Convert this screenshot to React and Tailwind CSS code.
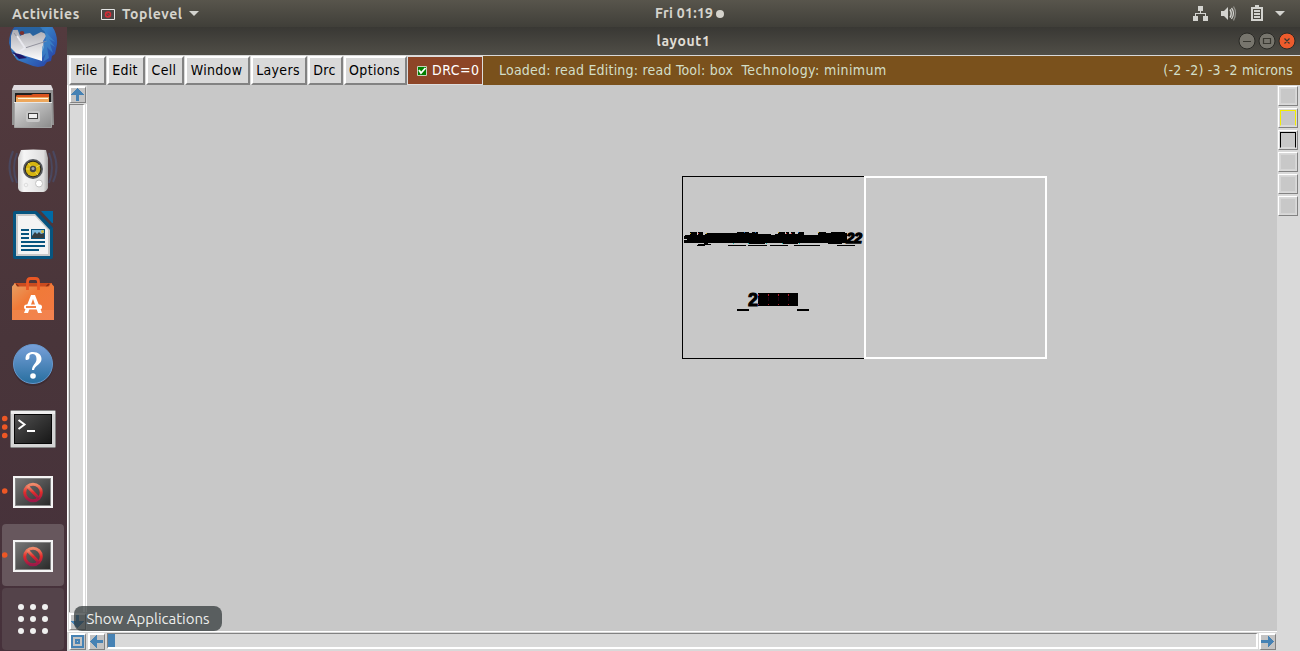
import React from 'react';

function Thunderbird() {
  return (
    <svg className="block" width="62" height="62" viewBox="2 12 62 62">
      <defs>
        <linearGradient id="tb" x1="0" y1="0" x2="1" y2="1"><stop offset="0" stopColor="#244c94" /><stop offset=".5" stopColor="#367fc6" /><stop offset="1" stopColor="#2537a0" /></linearGradient>
        <linearGradient id="mail" x1="0" y1="0" x2="0" y2="1"><stop offset="0" stopColor="#a9a9b0" /><stop offset="1" stopColor="#ffffff" /></linearGradient>
      </defs>
      <path d="M9 43C9 27 21 18 34 18c15 0 24 12 23 26l-2 10-3 2-1 5-4 1-3 4-6 1-5-1-8-3-8-3-5-7Z" fill="url(#tb)" />
      <path d="M13 30 42 29l4 7-3 5 1 6-2 5v9L16 53l-5-5V36Z" fill="url(#mail)" />
      <path d="m14 33 11 15 22-7" fill="none" stroke="#92929d" strokeWidth="1" />
      <path d="m17 36 8 12-11 7" fill="none" stroke="#e9e9ef" strokeWidth="2" />
      <path d="m12 52 7 7 8-1-5-3Z" fill="#201766" />
      <path d="M17 28 38 25l9 9-6-2-8 4-3-3-6 1-4 2Z" fill="#2863a0" />
      <ellipse cx="22" cy="33" rx="2.3" ry="2" fill="#7b302e" />
      <path d="m45 31 10 11-6-3 6 8-5-3 3 9-6-6 2 11-6 4 3-9-4 5V47l4-7Z" fill="#3f8acb" opacity=".65" />
    </svg>
  );
}

function Files() {
  return (
    <svg className="block" width="62" height="62" viewBox="2 76 62 62">
      <defs><linearGradient id="cabinet" x1="0" y1="0" x2="1" y2="1"><stop offset="0" stopColor="#dadada" /><stop offset="1" stopColor="#8b8b8b" /></linearGradient></defs>
      <path d="M14 85h37l2 4 1 36H12V89Z" fill="#929292" />
      <path d="M14 85h37l2 5H12Z" fill="#e0dce0" />
      <path d="M15 93h36v10H15Z" fill="#1f1f1f" />
      <path d="M17 95h14l2-1h16v8H16v-6Z" fill="#d9531e" />
      <path d="M16 97h33v5H16Z" fill="#eda75c" /><path d="M18 98h30v1H18Z" fill="#fff5e1" />
      <path d="M14.500 102.500h37v25h-37Z" fill="url(#cabinet)" stroke="#a2a2a2" />
      <path d="M14 102.500h38" stroke="#e8e8e8" />
      <rect x="26" y="111" width="14" height="11" rx="2" fill="#c7c7c7" />
      <rect x="28.500" y="113.500" width="9" height="5" fill="#efefef" stroke="#404040" />
    </svg>
  );
}

function MusicPlayer() {
  return (
    <svg className="block" width="62" height="62" viewBox="2 140 62 62">
      <defs><linearGradient id="speaker"><stop offset="0" stopColor="#d0d0d0" /><stop offset=".2" stopColor="#f6f6f6" /><stop offset=".85" stopColor="#dedede" /><stop offset="1" stopColor="#a6a6a6" /></linearGradient></defs>
      <g fill="none" stroke="#455781" strokeWidth="2" opacity=".5"><path d="M17 153q-6 15 0 30M13 151q-7 17 0 31M49 153q6 15 0 30M53 151q7 17 0 31" /></g>
      <path d="M21 150q12-1 25 0l2 8v30q-2 4-5 4H23q-4 0-5-4v-30Z" fill="url(#speaker)" />
      <circle cx="33" cy="169" r="10" fill="#55585d" /><circle cx="33" cy="169" r="8.3" fill="#2c291c" />
      <circle cx="33" cy="169" r="7.3" fill="#d6b512" /><path d="m28 163 5 6 5 6M26 169h7l7-4" stroke="#edda55" fill="none" />
      <circle cx="33" cy="169" r="3.2" fill="#484847" /><circle cx="33" cy="168.500" r="1.500" fill="#aaa" />
      <circle cx="39" cy="183.500" r="3.500" fill="#fff" stroke="#c3c3c3" /><circle cx="26" cy="185" r="1.800" fill="none" stroke="#dedede" />
    </svg>
  );
}

function Writer() {
  return (
    <svg className="block" width="62" height="62" viewBox="2 204 62 62">
      <path d="M15 211h21l17 17v29q0 2-2 2H15q-2 0-2-2v-44q0-2 2-2" fill="#075580" />
      <path d="M16 214h19l15 16v26H16Z" fill="#c9c9c9" /><path d="M18 216h17l13 14v24H18Z" fill="#f4f4f4" />
      <path d="m36 212 16 16" stroke="#06517d" strokeWidth="2" />
      <path d="M41 211h12v12h-1Z" fill="#006aa5" />
      <path d="M21 229h8v2h-8ZM21 233h8v2h-8ZM21 237h8v2h-8ZM21 241h24v2H21ZM21 245h24v2H21ZM21 249h18v2H21Z" fill="#08547e" />
      <path d="M31 229h14v10H31Z" fill="#08547e" /><path d="M32 230h12v7H32Z" fill="#7db9dd" /><path d="m32 236 3-4 2 2 2-2 2 2 3-1v5H32Z" fill="#353e41" /><circle cx="42.500" cy="231.500" r="1.500" fill="#d6bd3d" />
    </svg>
  );
}

function Software() {
  return (
    <svg className="block" width="62" height="62" viewBox="2 268 62 62">
      <defs><linearGradient id="shop" x1="0" y1="0" x2="1" y2="1"><stop offset="0" stopColor="#e7a064" /><stop offset=".4" stopColor="#f07a38" /><stop offset="1" stopColor="#f27842" /></linearGradient></defs>
      <path d="M14 283h38v4H14Z" fill="#c94b1f" /><path d="m16 284 3 3m30-3-3 3" stroke="#832e14" strokeWidth="1.500" />
      <path d="M12 286.500 15 283l2 3.500h32l2-3.500 3 3.500V320H12Z" fill="url(#shop)" />
      <path d="M27.500 290v-8q0-3.500 3-3.500h5q3 0 3 3.500v8" fill="none" stroke="#e95724" strokeWidth="2.800" />
      <path d="M12 310h42v10H12Z" fill="#fff" opacity=".08" />
      <path d="M31 295h4l7 18h-4l-5-14-5 14h-4Z" fill="#fff" /><rect x="24" y="304.500" width="18" height="5" rx="2.500" fill="#fff" /><path d="M26 307h10" stroke="#f27332" strokeWidth="1.800" />
    </svg>
  );
}

function Help() {
  return (
    <svg className="block" width="62" height="62" viewBox="2 332 62 62">
      <defs><linearGradient id="help" x1="0" y1="0" x2="0" y2="1"><stop offset="0" stopColor="#78a0d9" /><stop offset="1" stopColor="#286f9f" /></linearGradient></defs>
      <ellipse cx="33" cy="366" rx="20" ry="20" fill="#302128" opacity=".45" /><circle cx="33" cy="364" r="19.500" fill="url(#help)" stroke="#6798cd" />
      <path d="M25.500 359c0-5 3-7 7.500-7 5.500 0 8.500 3 8.500 7 0 5.500-6.500 6-7.500 11h-2c0-5.500 4.500-6 4.500-11 0-3.500-1.500-5-4-5-2 0-3.500 1-3 3 .5 3-4 4-4 2Z" fill="#fff" /><circle cx="33" cy="376" r="2.800" fill="#fff" />
    </svg>
  );
}

function Terminal() {
  return (
    <svg className="block" width="62" height="62" viewBox="2 396 62 62">
      <defs><linearGradient id="term" x1="0" y1="0" x2="1" y2="1"><stop offset="0" stopColor="#515151" /><stop offset=".5" stopColor="#333" /><stop offset="1" stopColor="#171717" /></linearGradient></defs>
      <g fill="#ed5725"><circle cx="4.700" cy="418.500" r="2.800" /><circle cx="4.700" cy="427" r="2.800" /><circle cx="4.700" cy="435.500" r="2.800" /></g>
      <rect x="10.500" y="410.500" width="45" height="37" rx="1" fill="#d4d4d4" stroke="#858585" /><path d="M11 411h44v3H11Z" fill="#eee" />
      <rect x="14" y="414" width="38" height="30" fill="#070707" /><rect x="15" y="415" width="36" height="28" fill="url(#term)" />
      <path d="m18.500 420 6 4.500-6 4.500" fill="none" stroke="#fff" strokeWidth="2" /><path d="M27 431h8" stroke="#fff" strokeWidth="2" />
    </svg>
  );
}

function MissingApp() {
  return (
    <svg className="block" width="62" height="62" viewBox="2 460 62 62">
      <defs><linearGradient id="missing" x1="0" y1="0" x2="1" y2="1"><stop offset="0" stopColor="#777" /><stop offset="1" stopColor="#292929" /></linearGradient><linearGradient id="stop" x1="0" y1="0" x2="0" y2="1"><stop offset="0" stopColor="#ef8c6c" /><stop offset=".5" stopColor="#e32b2b" /><stop offset="1" stopColor="#9c1848" /></linearGradient></defs>
      <circle cx="4.700" cy="491" r="2.800" fill="#ed5725" /><path d="M13 476h40v32H13Z" fill="#f4f4f4" /><rect x="15.500" y="478.500" width="35" height="27" fill="url(#missing)" stroke="#858585" />
      <g fill="none" stroke="url(#stop)" strokeWidth="3"><circle cx="33" cy="492.500" r="8.300" /><path d="m27.500 486.500 11.500 12" /></g>
    </svg>
  );
}

function Dock() {
  return (
    <aside className="flex w-[67px] shrink-0 flex-col justify-end gap-0.5 overflow-hidden bg-gradient-to-b from-[#533a3e] via-[#49353a] to-[#46313b] px-0.5 pb-px">
      {[Thunderbird, Files, MusicPlayer, Writer, Software, Help, Terminal, MissingApp].map((Icon, i) => <div className="h-[62px] w-[62px] shrink-0" key={i}><Icon /></div>)}
      <div className="h-[62px] w-[62px] shrink-0 rounded bg-[#67575d]"><MissingApp /></div>
      <div className="grid h-[62px] w-[62px] shrink-0 grid-cols-3 place-content-center gap-1.5 rounded bg-[#54434a] px-4">
        {Array.from({ length: 9 }, (_, i) => <i className="size-1.5 rounded-full bg-[#f0f0f0]" key={i} />)}
      </div>
    </aside>
  );
}

const raised = 'border-t-2 border-l-2 border-t-white border-l-white border-r-[#828282] border-b-[#828282]';

function Arrow({ direction }) {
  const d = direction === 'up' ? 'M6.500 0 13 7H8v6H5V7H0Z' : direction === 'down' ? 'M6.500 13 0 6h5V0h3v6h5Z' : direction === 'left' ? 'M0 6.500 6.500 0v5H13v3H6.500v5Z' : 'M13 6.500 6.500 0v5H0v3h6.500v5Z';
  return <svg className="shrink-0" width="13" height="13" viewBox="0 0 13 13" shapeRendering="crispEdges"><path d={d} fill="#4682b4" /></svg>;
}

function ArrowButton({ direction }) {
  return <button className={'flex size-[17px] shrink-0 items-start justify-start border-r border-b bg-[#c3c3c3] ' + raised}><Arrow direction={direction} /></button>;
}

function MenuBar() {
  const items = [
    ['File', 'w-[37px]'], ['Edit', 'w-[38px]'], ['Cell', 'w-[38px]'], ['Window', 'w-[65px]'], ['Layers', 'w-[56px]'], ['Drc', 'w-[35px]'], ['Options', 'w-[63px]'],
  ];
  return (
    <header className="flex h-[30px] shrink-0 border-t border-[#d9d9d9] bg-[#7a511c] pr-px font-['DejaVu_Sans_Condensed','DejaVu_Sans',sans-serif] text-[14px] tracking-[.31px] [font-stretch:condensed]">
      <div className="flex gap-px bg-[#d9d9d9] pl-0.5">
        {items.map(([name, width]) => <button className={'flex h-[29px] items-center justify-center whitespace-nowrap border-r-2 border-b-2 bg-[#d9d9d9] pr-[2px] text-black ' + raised + ' ' + width} key={name}>{name}</button>)}
      </div>
      <button className="flex w-[76px] items-center gap-[4px] border border-[#dedede] bg-[#8d4527] pl-2 tracking-[.5px] text-white">
        <svg width="12" height="12" viewBox="0 0 12 12"><path d="M1.500 1.500h9v9h-9Z" fill="#008000" stroke="#c7d2bb" /><path d="m3 5 2 3 4.500-5" fill="none" stroke="white" strokeWidth="1.800" /></svg>
        <span className="whitespace-nowrap">DRC=0</span>
      </button>
      <div className="flex flex-1 items-center justify-between pl-4 pr-1.5 text-[#d3dfc8]">
        <span className="whitespace-pre tracking-[.22px]">Loaded: read Editing: read Tool: box  <span className="tracking-[.41px]">Technology: minimum</span></span>
        <span className="tracking-[.18px]">(-2 -2) -3 -2 microns</span>
      </div>
    </header>
  );
}

function Drawing() {
  return (
    <svg className="block" width="1190" height="546" viewBox="87 85 1190 546">
      <g shapeRendering="crispEdges"><rect x="682.500" y="176.500" width="182" height="182" fill="none" stroke="#000" /><rect x="865" y="177" width="181" height="181" fill="none" stroke="#fff" strokeWidth="2" /></g>
      <g shapeRendering="crispEdges">
        <path d="M684 236H685V235H690V232H697V235H698V232H703V235H705V234H707V233H737V232H749V233H752V232H758V234H771V235H775V234H778V232H785V234H786V232H789V234H791V232H795V234H798V232H804V235H818V232H826V233H831V232H845V233H847V243H842V244H828V243H811V243H803V243H798V244H783V243H779V243H765V244H748V243H733V243H718V243H708V244H704V243H684V240H687V239H684Z" fill="#000" />
        <path d="M697 245h8v1h-8ZM698 244h13v1h-13ZM728 245h18v1h-18ZM748 245h19v1h-19ZM770 245h18v1h-18ZM794 245h26v1h-26ZM837 245h18v1h-18Z" fill="#000" />
      </g>
      <g shapeRendering="crispEdges"><path d="M744 232h1v1h-1ZM755 232h1v1h-1ZM798 232h1v1h-1Z" fill="#146ac1" /><path d="M698 233h1v1h-1ZM786 233h1v1h-1ZM791 233h1v1h-1Z" fill="#c72828" /><path d="M690 233h1v1h-1ZM706 233h1v1h-1ZM778 232h1v1h-1ZM818 232h1v1h-1Z" fill="#cba117" /><path d="M733 243h1v1h-1ZM748 243h1v1h-1ZM766 243h1v1h-1ZM782 243h1v1h-1ZM799 243h1v1h-1Z" fill="#24b5b0" /></g>
      <text x="846.500" y="243" fontFamily="Liberation Sans, sans-serif" fontWeight="bold" fontStyle="italic" fontSize="14" textLength="15.500" lengthAdjust="spacingAndGlyphs" stroke="#000" strokeWidth="1.400">22</text>
      <text x="748" y="306" fontFamily="Liberation Sans, sans-serif" fontSize="18" fontWeight="bold" stroke="#000" strokeWidth="1">2</text>
      <path d="M758 293h40v13h-40Z" fill="#000" shapeRendering="crispEdges" />
      <g fill="none" shapeRendering="crispEdges"><path d="M758.500 294v2m0 8v1m10-11v2m0 8v1m10-11v2m0 8v1m10-11v2m0 8v1" stroke="#b91524" /><path d="M758.500 297v4m10-4v4m10-4v4m10-4v4" stroke="#250015" /></g>
      <path d="M737 310h12M797 310h12" stroke="#000" strokeWidth="2" shapeRendering="crispEdges" />
    </svg>
  );
}

function LayoutWindow() {
  return (
    <main className="flex min-w-0 flex-1 flex-col">
      <div className="flex h-7 shrink-0 items-center bg-gradient-to-b from-[#393834] to-[#504e47] font-[Ubuntu,'Noto_Sans',sans-serif] text-[14px] font-bold text-[#e0ddd4]">
        <span className="w-[73px]" /><h1 className="flex-1 text-center text-[14px] tracking-[.6px]">layout1</h1>
        <svg width="73" height="28" viewBox="1227 27 73 28"><g stroke="#292925"><circle cx="1247" cy="41" r="8" fill="#77756d" /><circle cx="1267" cy="41" r="8" fill="#77756d" /><circle cx="1287" cy="41" r="8" fill="#ed5b2c" /></g><path d="M1243 41.500h8M1263.500 38.500h7v5h-7ZM1284.500 38.500l5 5m0-5-5 5" fill="none" stroke="#393831" strokeWidth="1.200" /></svg>
      </div>
      <div className="flex min-h-0 flex-1 flex-col bg-[#d9d9d9]">
        <MenuBar />
        <div className="flex min-h-0 flex-1">
          <div className="flex min-w-0 flex-1 flex-col">
            <div className="flex h-[546px] shrink-0">
              <div className="flex w-5 shrink-0 flex-col border-l border-white pb-px pl-px pt-px">
                <ArrowButton direction="up" />
                <div className="mb-px mt-px w-4 flex-1 border-t border-r-2 border-l border-[#828282] border-r-white shadow-[1px_0_0_#d9d9d9,2px_0_0_#fff]" />
                <ArrowButton direction="down" />
              </div>
              <section className="flex-1 bg-[#c8c8c8]"><Drawing /></section>
            </div>
            <div className="flex h-5 items-start border-t border-white pl-0.5 pt-px">
              <button className={'mr-[2px] flex size-[17px] shrink-0 items-start justify-start border-r border-b bg-[#c3c3c3] ' + raised}><svg className="shrink-0" width="13" height="13" viewBox="0 0 13 13" shapeRendering="crispEdges"><path d="M1 1h11v11H1Z" fill="none" stroke="#4682b4" strokeWidth="2" /><path d="M4 4h5v5H4ZM6 6v1h1V6Z" fill="#4682b4" fillRule="evenodd" /></svg></button>
              <ArrowButton direction="left" />
              <div className="ml-[2px] mr-px flex h-4 flex-1 border-t border-r-2 border-b-2 border-l border-[#828282] border-r-white border-b-white"><i className="h-[13px] w-[7px] bg-[#4682b4]" /></div>
              <ArrowButton direction="right" /><span className="w-px" />
            </div>
          </div>
          <aside className="flex w-[23px] shrink-0 flex-col gap-0.5 pl-px pt-px">
            {['border-[#d5d5d5]', 'border-l-[#f3ed00] border-t-[#f3ed00] border-r-[#f3ed00] border-b-[#d9d9d9]', 'border-l-black border-t-black border-r-black border-b-[#d9d9d9]', 'border-[#d5d5d5]', 'border-[#d5d5d5]', 'border-[#d5d5d5]'].map((color, i) => <button className="size-5 border border-t-white border-r-[#828282] border-b-[#828282] border-l-white bg-[#d9d9d9] p-px" key={i}><i className={'block size-4 border bg-[#c8c8c8] ' + color} /></button>)}
          </aside>
        </div>
      </div>
    </main>
  );
}

function Desktop() {
  return (
    <div className="relative flex h-[651px] w-[1300px] flex-col overflow-hidden bg-[#d9d9d9]">
      <nav className="grid h-[27px] shrink-0 grid-cols-[655px_75px_1fr] items-center bg-gradient-to-b from-[#58554c] to-[#403f39] font-[Ubuntu,'Noto_Sans',sans-serif] text-[14px] font-semibold tracking-[.55px] text-[#d5d3cc]">
        <div className="flex items-center pl-3 pt-px"><span className="w-[89px]">Activities</span><svg className="mr-[7px]" width="14" height="11" viewBox="0 0 14 11"><path d="M.5.5h13v10H.5Z" fill="#4b4646" stroke="#e4e4e4" /><circle cx="7" cy="5.500" r="2.500" fill="none" stroke="#d72c36" strokeWidth="1.500" /><path d="m5.500 4 3 3" stroke="#d72c36" /></svg><span className="w-[67px]">Toplevel</span><svg width="10" height="6" viewBox="0 0 10 6"><path d="M0 0h10L5 5Z" fill="#d3d3cf" /></svg></div>
        <div className="flex items-center gap-[3px] whitespace-nowrap tracking-[.3px]"><span>Fri 01:19</span><i className="size-2 rounded-full bg-[#d5d3cc]" /></div>
        <div className="flex justify-end"><svg width="107" height="27" viewBox="1193 0 107 27"><g fill="#d3d3cf" shapeRendering="crispEdges"><path d="M1198 6h5v5h-5ZM1193 16h5v5h-5ZM1203 16h5v5h-5ZM1200 11h1v2h5v3h-1v-2h-9v2h-1v-3h5Z" /></g><g fill="#d3d3cf"><path d="M1221 11h3l4-4v13l-4-4h-3ZM1275 11h10l-5 5Z" /></g><g fill="none" stroke="#d3d3cf"><path d="M1230 9.500q2.500 4 0 8" strokeWidth="1.500" /><path d="M1231.500 8q4 5 0 11" strokeWidth="1.300" /><path d="M1233.500 6.500q4 6 0 14" strokeWidth="1.300" opacity=".5" /><path d="M1252 8h10v12h-10ZM1255 6h4M1254 11h6m-6 3h6m-6 3h6" strokeWidth="2" /></g></svg></div>
      </nav>
      <div className="flex min-h-0 flex-1"><Dock /><LayoutWindow /></div>
      <div className="absolute left-[74px] top-[606px] flex h-[25px] w-[148px] items-center justify-center whitespace-nowrap rounded-lg bg-[#2e3436b8] pt-px font-[Ubuntu,'Noto_Sans',sans-serif] text-[15px] text-[#eeeeec]">Show Applications</div>
    </div>
  );
}

export default function App() {
  return <Desktop />;
}
